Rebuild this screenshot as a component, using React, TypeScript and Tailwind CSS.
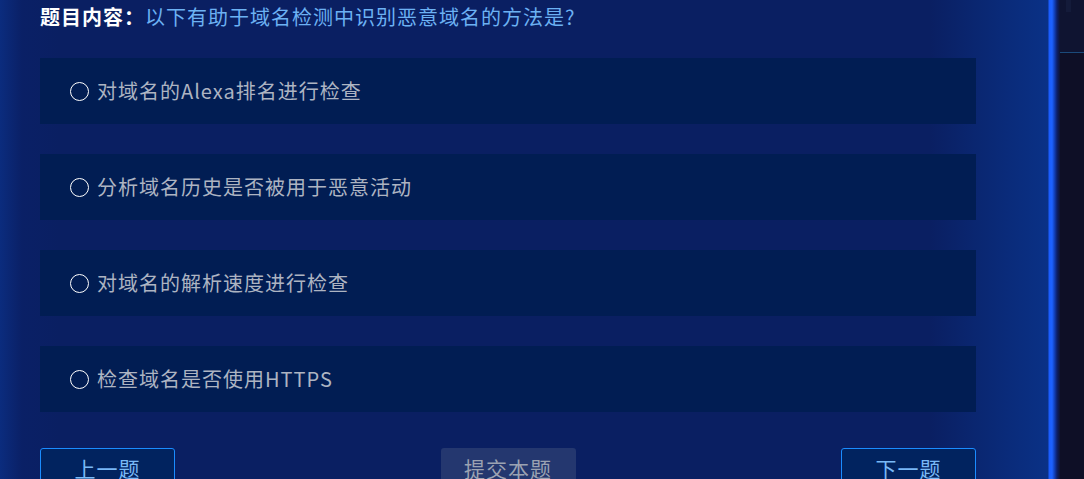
import * as React from "react";

const options = [
  "对域名的Alexa排名进行检查",
  "分析域名历史是否被用于恶意活动",
  "对域名的解析速度进行检查",
  "检查域名是否使用HTTPS",
];

const font = { fontFamily: '"Noto Sans CJK SC", "Noto Sans", sans-serif' };

export default function App() {
  return (
    <div className="flex w-full h-[479px] overflow-hidden" style={font}>
      {/* Question panel */}
      <main className="w-[1048px] shrink-0 flex flex-col bg-[linear-gradient(90deg,#0b2c7e_0px,#0a2066_22px,#0a1f62_60px,#0a1f62_930px,#0a2a78_1000px,#0a3186_1048px)] pl-[40px] pt-[3px]">
        <div className="h-[28px] leading-[28px] text-[20px] tracking-[1px]">
          <span className="text-white font-semibold">题目内容：</span>
          <span className="text-[#6cb1f3]">以下有助于域名检测中识别恶意域名的方法是?</span>
        </div>

        <div className="mt-[27px] w-[936px] flex flex-col gap-[30px]">
          {options.map((o) => (
            <div key={o} className="h-[66px] bg-[#011d53] flex items-center pl-[30px]">
              <span className="w-[19px] h-[19px] rounded-full border-[1.5px] border-white shrink-0" />
              <span className="ml-[8px] text-[20px] tracking-[1px] text-[#adb4c2] leading-none">{o}</span>
            </div>
          ))}
        </div>

        <div className="mt-[36px] w-[936px] flex items-start justify-between">
          <button className="w-[135px] h-[42px] rounded-[3px] border border-[#1a8cff] bg-[#01235f] text-[21px] tracking-[1px] text-[#79b8f6]">
            上一题
          </button>
          <button className="w-[135px] h-[42px] rounded-[3px] bg-[#24376f] text-[21px] tracking-[1px] text-[#9ba2b2]">
            提交本题
          </button>
          <button className="w-[135px] h-[42px] rounded-[3px] border border-[#1a8cff] bg-[#01235f] text-[21px] tracking-[1px] text-[#79b8f6]">
            下一题
          </button>
        </div>
      </main>

      {/* Glow divider */}
      <div className="w-[12px] shrink-0 bg-[linear-gradient(90deg,#0a3186_0px,#1a5cff_1px,#1d62ff_4px,#1346c8_6px,#0c1f6a_9px,#0e1230_12px)]" />

      {/* Side panel */}
      <aside className="flex-1 flex flex-col bg-[#0e0f26]">
        <div className="h-[52px] bg-[#0f1431] relative">
          <div className="absolute left-[6px] top-0 w-[5px] h-[12px] bg-[#141b3a]" />
        </div>
        <div className="h-[1px] bg-[#1b4a7a]" />
      </aside>
    </div>
  );
}
